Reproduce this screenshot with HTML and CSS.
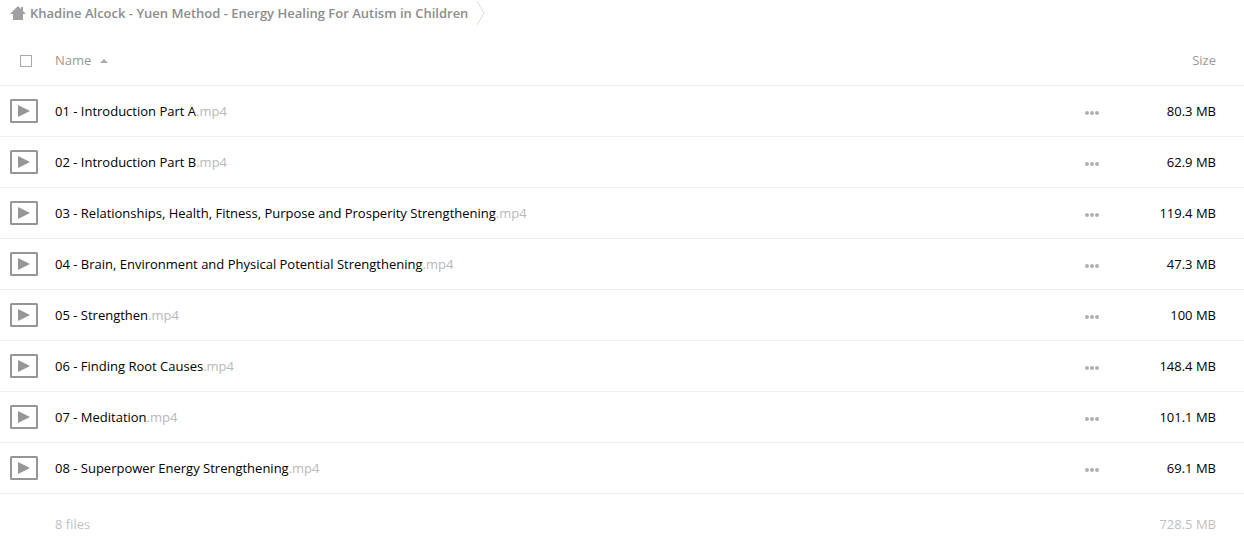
FILE: index.html
```html
<!DOCTYPE html>
<html lang="en">
<head>
<meta charset="utf-8">
<title>Khadine Alcock - Yuen Method</title>
<link rel="stylesheet" href="styles.css">
</head>
<body>
<svg class="defs" aria-hidden="true">
<symbol id="video" viewBox="0 0 28 24"><rect x="1" y="1" width="26" height="22" rx="0.5" fill="#fff" stroke="#969696" stroke-width="2"/><path d="M8 6l12 6-12 6z" fill="#969696"/></symbol>
<symbol id="more" viewBox="0 0 16 16"><circle cx="3" cy="8" r="2"/><circle cx="8" cy="8" r="2"/><circle cx="13" cy="8" r="2"/></symbol>
</svg>
<nav class="crumbs" aria-label="Breadcrumb">
<a class="crumb" href="#"><svg class="home" viewBox="0 0 16 16" aria-hidden="true"><path d="M8 1L0 9h3v6h10V9h3l-3-3V2h-2v2z"/></svg>Khadine Alcock - Yuen Method - Energy Healing For Autism in Children</a>
<svg class="sep" viewBox="0 0 10 26" aria-hidden="true"><path d="M1 1l7 12-7 12"/></svg>
</nav>
<table class="files">
<thead><tr><th class="icon"><input class="check" type="checkbox" aria-label="Select all"></th><th class="name"><button class="sort" type="button">Name<span class="arrow"></span></button></th><th class="menu"></th><th class="size"><button class="sort" type="button">Size</button></th></tr></thead>
<tbody id="rows"></tbody>
<tfoot><tr><td></td><td class="name">8 files</td><td></td><td class="size">728.5 MB</td></tr></tfoot>
</table>
<script src="files.js"></script>
</body>
</html>
```
FILE: styles.css
```css
body { margin: 0; background: #fff; color: #000; font: 13px/20px "Open Sans", sans-serif; }
.defs { position: absolute; width: 0; height: 0; }
.crumbs { display: flex; align-items: center; height: 26px; margin-bottom: 9px; padding-left: 10px; }
.crumb { display: flex; align-items: center; gap: 4px; color: #8c8c8c; font-weight: 600; text-decoration: none; }
.home { width: 16px; height: 16px; fill: #a0a0a0; }
.sep { width: 10px; height: 26px; margin-left: 8px; fill: none; stroke: #ddd; }
.files { width: 100%; border-collapse: collapse; table-layout: fixed; }
.files th, .files td { height: 50px; padding: 0; border-bottom: 1px solid #eee; font-weight: 400; text-align: left; }
.files .icon { width: 55px; }
.files .menu { width: 60px; }
.files .size { width: 72px; padding-right: 28px; text-align: right; }
.check { display: block; appearance: none; width: 12px; height: 12px; margin: 2px 0 0 20px; border: 1px solid #aaa; background: #fff; }
.sort { padding: 0; border: 0; background: none; color: #999; font: inherit; }
.arrow { display: inline-block; margin-left: 9px; border: 4px solid transparent; border-top: 0; border-bottom-color: #aaa; vertical-align: 2px; }
.video { display: block; width: 28px; height: 24px; margin-left: 10px; }
.name a { color: #000; text-decoration: none; }
.ext { color: #b9b9b9; }
.more { display: block; padding: 4px 0 0; border: 0; background: none; }
.more svg { display: block; width: 16px; height: 16px; fill: #b0b0b0; }
.files tfoot td { height: 60px; border: 0; color: #bfbfbf; }
```
FILE: files.js
```js
const files = [
  ["01 - Introduction Part A", "80.3 MB"],
  ["02 - Introduction Part B", "62.9 MB"],
  ["03 - Relationships, Health, Fitness, Purpose and Prosperity Strengthening", "119.4 MB"],
  ["04 - Brain, Environment and Physical Potential Strengthening", "47.3 MB"],
  ["05 - Strengthen", "100 MB"],
  ["06 - Finding Root Causes", "148.4 MB"],
  ["07 - Meditation", "101.1 MB"],
  ["08 - Superpower Energy Strengthening", "69.1 MB"]
];
document.getElementById("rows").innerHTML = files.map(([name, size]) => `<tr>
<td><svg class="video" aria-hidden="true"><use href="#video"/></svg></td>
<td class="name"><a href="#">${name}<span class="ext">.mp4</span></a></td>
<td><button class="more" type="button" aria-label="Actions for ${name}"><svg aria-hidden="true"><use href="#more"/></svg></button></td>
<td class="size">${size}</td></tr>`).join("");
```
